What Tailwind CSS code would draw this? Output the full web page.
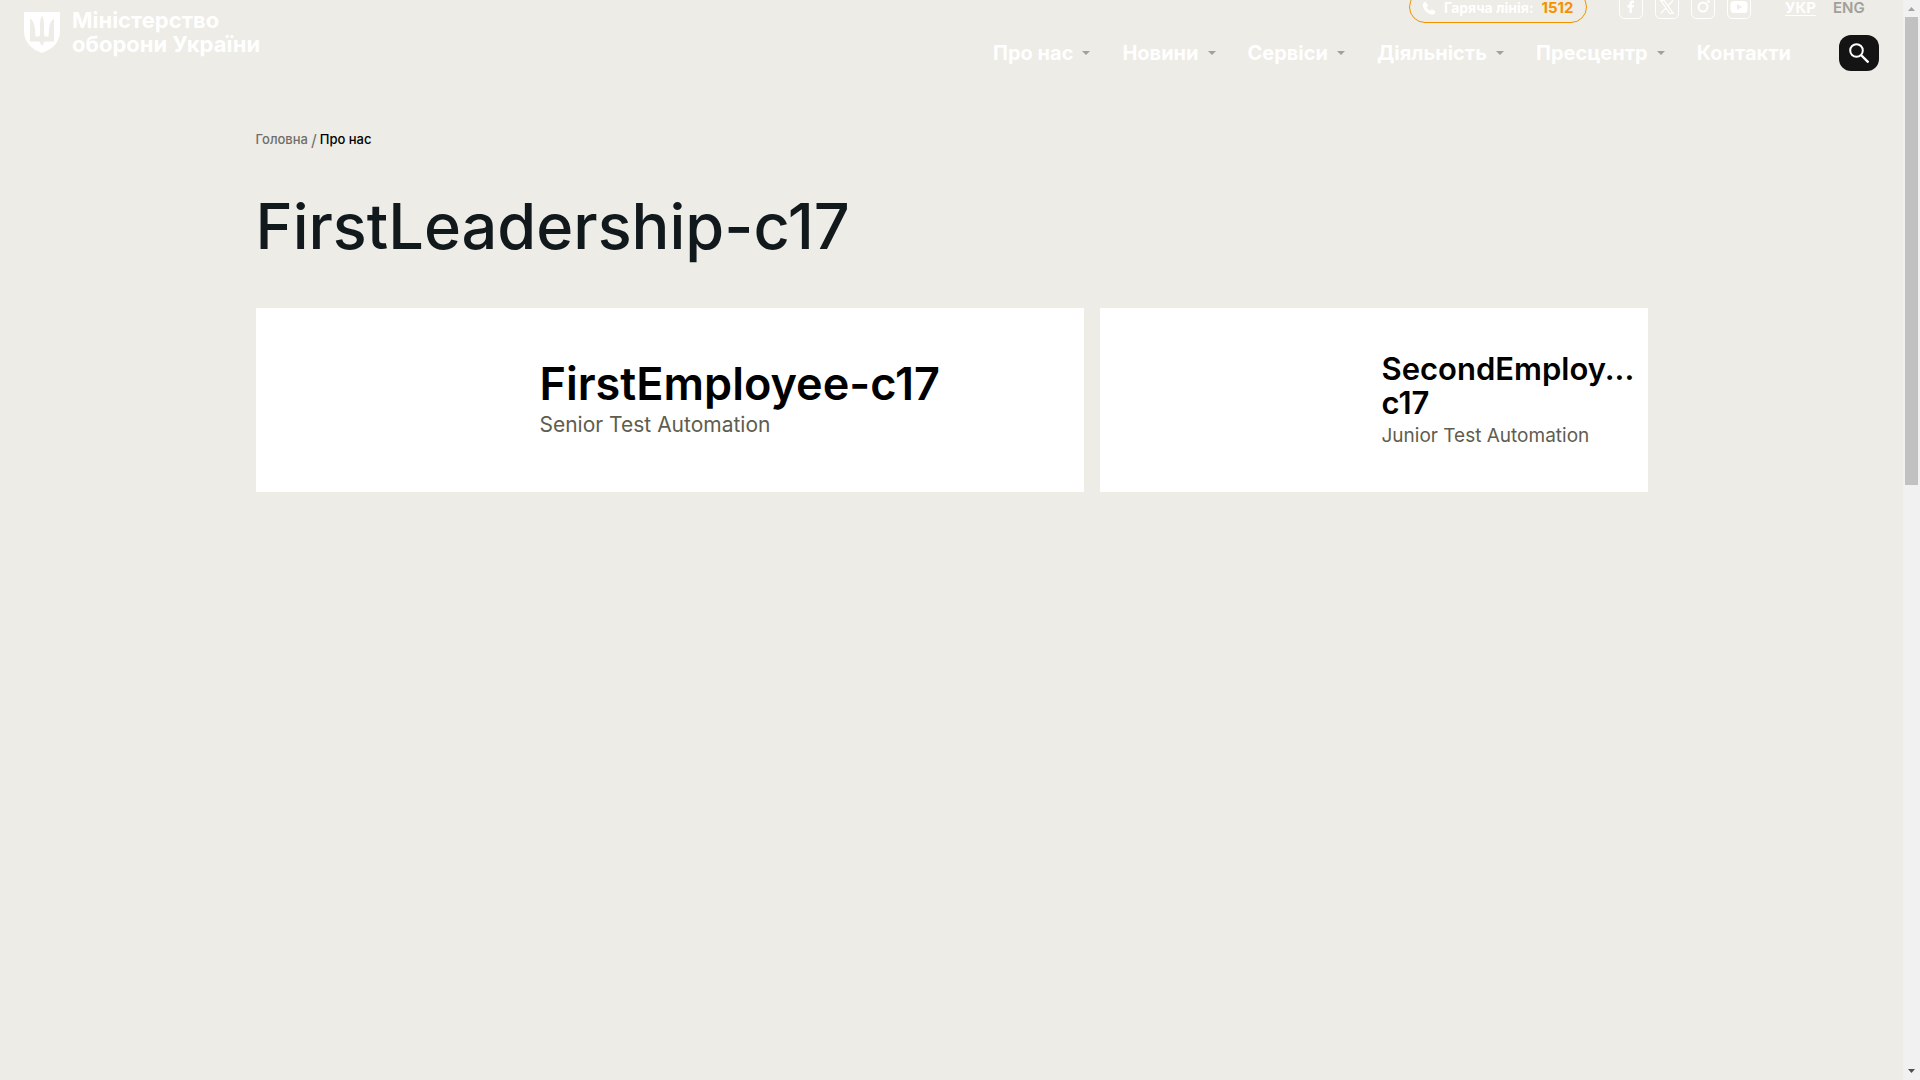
<!DOCTYPE html>
<html lang="uk">
<head>
<meta charset="utf-8">
<title>FirstLeadership-c17</title>
<script src="https://cdn.jsdelivr.net/npm/@tailwindcss/browser@4"></script>
</head>
<body class="flex h-screen overflow-hidden bg-[#edece6] font-['Inter','Liberation_Sans',sans-serif]">
<div class="min-w-0 flex-1">
  <header class="flex h-20 items-start justify-between pr-6 pl-6 text-white">
    <a href="#" class="flex gap-3 pt-2">
      <svg class="mt-1 h-[41px] w-9" viewBox="0 0 36 41">
        <path fill="#fff" d="M0 0h36v19c0 11-7 18-18 22C7 37 0 30 0 19z"/>
        <path fill="#edece6" d="M6 6.500q4.500 3 5 11l.4 7h3.800q1.300-2.500.8-8.500-.5-8 2-12.500 2.500 4.500 2 12.500-.5 6 .8 8.500h3.800l.4-7q.5-8 5-11v23h-9.200L18 34l-2.800-4.500H6z"/>
      </svg>
      <span class="text-[22px] leading-6 font-bold">Міністерство<br>оборони України</span>
    </a>
    <div class="flex flex-col items-end">
      <div class="-mt-[9px] flex items-center pr-[14px]">
        <a href="#" class="mr-8 flex h-8 w-[178px] items-center gap-2 rounded-2xl border border-[#f39200] pt-px pl-3 text-sm font-bold whitespace-nowrap">
          <svg class="h-[14px] w-[14px]" viewBox="0 0 16 16" fill="#fff"><path d="M1 3 4 .5 7 5 5.300 7c1 2 2.500 3.300 4.200 4.200L11 9.500l4.500 2.300-1 3.200C7 17 0 9 1 3z"/></svg>
          <span>Гаряча лінія:</span><span class="text-[15px] text-[#f39200]">1512</span>
        </a>
        <div class="mr-[34px] flex gap-3">
          <a href="#" aria-label="Facebook"><svg class="h-6 w-6" viewBox="0 0 24 24"><rect x=".5" y=".5" width="23" height="23" rx="5" fill="none" stroke="#fff"/><path fill="#fff" d="M10.500 18v-5.500H8.500V10h2V8.300C10.500 6.500 11.500 5.500 13.200 5.500H15V8h-1.200c-.7 0-1 .3-1 1v1H15l-.4 2.500h-1.800V18z"/></svg></a>
          <a href="#" aria-label="X"><svg class="h-6 w-6" viewBox="0 0 24 24"><rect x=".5" y=".5" width="23" height="23" rx="5" fill="none" stroke="#fff"/><path fill="none" stroke="#fff" stroke-width="1.300" d="M5.800 5.700h3.400l9 12.600h-3.400zM18 5.500l-5.500 5.700M5.500 18.500l6-6"/></svg></a>
          <a href="#" aria-label="Instagram"><svg class="h-6 w-6" viewBox="0 0 24 24"><rect x=".5" y=".5" width="23" height="23" rx="5" fill="none" stroke="#fff"/><circle cx="12" cy="12" r="4.500" fill="none" stroke="#fff" stroke-width="2"/><circle cx="17.500" cy="6.500" r="1.500" fill="#fff"/></svg></a>
          <a href="#" aria-label="YouTube"><svg class="h-6 w-6" viewBox="0 0 24 24"><rect x=".5" y=".5" width="23" height="23" rx="5" fill="none" stroke="#fff"/><rect x="3.500" y="6" width="17" height="12" rx="3.500" fill="#fff"/><path fill="#edece6" d="m10 9 5 3-5 3z"/></svg></a>
        </div>
        <a href="#" class="mr-4 w-8 pt-[3px] text-[15px] font-bold underline underline-offset-2">УКР</a>
        <a href="#" class="w-8 pt-[3px] text-[15px] font-semibold text-[#a1a09b]">ENG</a>
      </div>
      <nav class="mt-3 flex h-9 items-center gap-8 text-xl font-bold whitespace-nowrap">
        <a href="#" class="flex items-center gap-[9px]">Про нас <svg class="h-1 w-2" viewBox="0 0 8 4" fill="#a1a09b"><path d="M0 0h8L4 4z"/></svg></a>
        <a href="#" class="flex items-center gap-[9px]">Новини <svg class="h-1 w-2" viewBox="0 0 8 4" fill="#a1a09b"><path d="M0 0h8L4 4z"/></svg></a>
        <a href="#" class="flex items-center gap-[9px]">Сервіси <svg class="h-1 w-2" viewBox="0 0 8 4" fill="#a1a09b"><path d="M0 0h8L4 4z"/></svg></a>
        <a href="#" class="flex items-center gap-[9px]">Діяльність <svg class="h-1 w-2" viewBox="0 0 8 4" fill="#a1a09b"><path d="M0 0h8L4 4z"/></svg></a>
        <a href="#" class="flex items-center gap-[9px]">Пресцентр <svg class="h-1 w-2" viewBox="0 0 8 4" fill="#a1a09b"><path d="M0 0h8L4 4z"/></svg></a>
        <a href="#">Контакти</a>
        <button type="button" aria-label="Пошук" class="ml-4 flex h-9 w-10 items-center justify-center rounded-xl bg-[#141414]"><svg class="h-5 w-5" viewBox="0 0 20 20" fill="none" stroke="#fff" stroke-width="2"><circle cx="7.500" cy="7.500" r="6.300"/><path d="m12 12 7.500 7.500" stroke-width="2.400"/></svg></button>
      </nav>
    </div>
  </header>
  <main class="mx-auto max-w-[1440px] px-6 pt-[52px]">
    <div class="flex h-4 items-center gap-[3px] text-[13px] font-medium text-[#6f6f6c]"><a href="#">Головна</a><span class="text-base font-normal">/</span><span class="text-black">Про нас</span></div>
    <h1 class="mt-10 text-[63px] leading-[76px] font-medium text-[#11191d]">FirstLeadership-c17</h1>
    <div class="mt-11 grid grid-cols-[828fr_548fr] gap-4">
      <a href="#" class="flex h-[184px] flex-col justify-center bg-white pt-px pl-[284px]">
        <h2 class="text-[45px] leading-[48px] font-semibold text-black">FirstEmployee-c17</h2>
        <p class="text-[21px] leading-[34px] text-[#5f5d4e]">Senior Test Automation</p>
      </a>
      <a href="#" class="flex h-[184px] flex-col justify-center bg-white pt-[3px] pl-[282px]">
        <h2 class="text-[31px] leading-[34px] font-semibold text-black">SecondEmploy...<br>c17</h2>
        <p class="text-[19px] leading-8 text-[#5f5d4e]">Junior Test Automation</p>
      </a>
    </div>
  </main>
</div>
<div class="flex w-[17px] flex-col items-center justify-between bg-[#f1f1f1]" aria-hidden="true">
  <div class="flex flex-col items-center"><svg class="h-[17px] w-[17px]" viewBox="0 0 17 17" fill="#a3a3a3"><path d="M5 11h7L8.500 7z"/></svg><div class="h-[468px] w-[13px] bg-[#c1c1c1]"></div></div>
  <svg class="h-[17px] w-[17px]" viewBox="0 0 17 17" fill="#505050"><path d="M5 6h7l-3.500 4z"/></svg>
</div>
</body>
</html>
